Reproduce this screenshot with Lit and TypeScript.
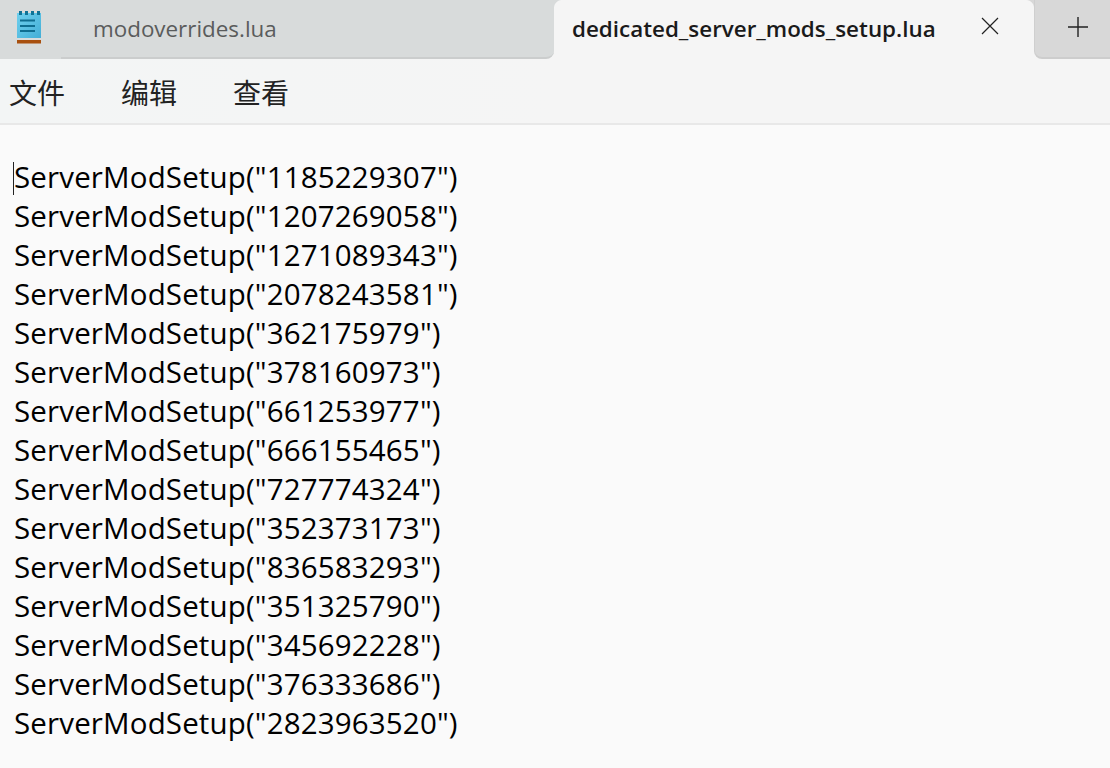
import { LitElement, html, css } from "lit";
import { customElement } from "lit/decorators.js";

const IDS = ["1185229307","1207269058","1271089343","2078243581","362175979","378160973","661253977","666155465","727774324","352373173","836583293","351325790","345692228","376333686","2823963520"];

@customElement("app-root")
export class AppRoot extends LitElement {
  static styles = css`
    :host { display: block; width: 1110px; height: 768px; overflow: hidden; background: #fafafa;
      font-family: "Open Sans", "Noto Sans CJK SC", sans-serif; color: #111; }
    .tabs { display: flex; height: 59px; background: #f5f5f5; align-items: stretch; }
    .logo { width: 61px; flex: none; padding: 10px 0 0 16px; box-sizing: border-box; background: #d8dbdb; }
    .tab1 { width: 493px; flex: none; box-sizing: border-box; padding: 0 0 0 32px; display: flex; align-items: center; font-size: 22.4px; color: #5a5c5c; background: #d8dbdb; border-bottom: 2px solid #cbcdcd; border-radius: 0 0 8px 0; }
    .tab2 { width: 480px; flex: none; box-sizing: border-box; padding: 0 0 2px 18px; display: flex; align-items: center; font-size: 22.4px; font-weight: 600; color: #1a1a1a; position: relative; }
    .tab2 span { flex: 1; white-space: nowrap; }
    .tab2 svg { margin: 0 35px 5px 0; }
    .tab2::before, .tab2::after { content: ""; position: absolute; top: 0; width: 8px; height: 8px; }
    .tab2::before { left: 0; background: radial-gradient(circle at 100% 100%, transparent 7.5px, #d8dbdb 8.5px); }
    .tab2::after { right: 0; background: radial-gradient(circle at 0 100%, transparent 7.5px, #d8d8d8 8.5px); }
    .plus { flex: 1; display: flex; align-items: center; padding: 0 0 3px 33px; box-sizing: border-box; background: #d8d8d8; border-bottom: 2px solid #cdcdcd; border-left: 1px solid #cfcfcf; border-radius: 0 0 0 8px; }
    .menu { height: 66px; box-sizing: border-box; background: linear-gradient(90deg, #f3f5f5, #f5f5f5 50%); border-bottom: 2px solid #e8e8e8; display: flex; gap: 56px; padding: 2px 0 0 9px; align-items: center; font-size: 28px; font-family: "Noto Sans CJK SC", sans-serif; color: #222; }
    .content { padding: 32px 0 0 14px; font-size: 29.5px; line-height: 39px; letter-spacing: 0.15px; color: #000; position: relative; }
    .caret { position: absolute; left: 13px; top: 37px; width: 1px; height: 33px; background: #222; }
  `;
  render() {
    return html`
      <div class="tabs">
        <div class="logo">
          <svg width="26" height="34" viewBox="0 0 26 34">
            <defs><linearGradient id="g" x1="0" y1="0" x2="1" y2="1"><stop offset="0" stop-color="#6fd0ee"/><stop offset="1" stop-color="#43aed6"/></linearGradient></defs>
            <rect x="1" y="3" width="24" height="25" fill="url(#g)"/>
            <path d="M3 1h3v4H3zM9 1h3v4H9zM15 1h3v4h-3zM21 1h3v4h-3z" fill="#0f7396"/>
            <path d="M4 9.5h15v2H4zM4 15h15v2H4zM4 20h15v2H4z" fill="#0f6d90"/>
            <rect x="1" y="30" width="24" height="3.5" fill="#a8500f"/>
          </svg>
        </div>
        <div class="tab1">modoverrides.lua</div>
        <div class="tab2"><span>dedicated_server_mods_setup.lua</span>
          <svg width="18" height="18" viewBox="0 0 18 18"><path d="M1 1l16 16M17 1L1 17" stroke="#222" stroke-width="1.2" fill="none"/></svg>
        </div>
        <div class="plus"><svg width="20" height="20" viewBox="0 0 20 20"><path d="M10 0v20M0 10h20" stroke="#222" stroke-width="1.4" fill="none"/></svg></div>
      </div>
      <div class="menu"><span>文件</span><span>编辑</span><span>查看</span></div>
      <div class="content">
        <div class="caret"></div>
        ${IDS.map((id) => html`<div>ServerModSetup("${id}")</div>`)}
      </div>
    `;
  }
}
